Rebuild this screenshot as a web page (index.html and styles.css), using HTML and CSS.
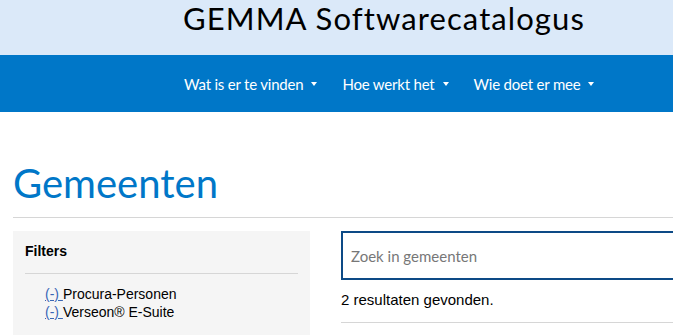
FILE: index.html
```html
<!DOCTYPE html>
<html lang="nl">
<head>
    <meta charset="UTF-8">
    <meta name="viewport" content="width=device-width, initial-scale=1.0">
    <title>Gemeenten - GEMMA Softwarecatalogus</title>
    <link rel="stylesheet" href="styles.css">
</head>
<body>
    <header class="site-header">
        <div class="brand">GEMMA Softwarecatalogus</div>
    </header>

    <nav class="main-nav">
        <ul>
            <li><a href="#">Wat is er te vinden <span class="caret"></span></a></li>
            <li><a href="#">Hoe werkt het <span class="caret"></span></a></li>
            <li><a href="#">Wie doet er mee <span class="caret"></span></a></li>
        </ul>
    </nav>

    <main class="container">
        <h1 class="page-title">Gemeenten</h1>

        <div class="columns">
            <aside class="filters">
                <h4>Filters</h4>
                <ul>
                    <li><a href="#">(-) </a>Procura-Personen</li>
                    <li><a href="#">(-) </a>Verseon® E-Suite</li>
                </ul>
            </aside>

            <section class="results">
                <input type="text" class="search" placeholder="Zoek in gemeenten">
                <p class="count">2 resultaten gevonden.</p>
            </section>
        </div>
    </main>
</body>
</html>
```

FILE: styles.css
```css
:root {
    --primary: #0077c8;
    --header-bg: #dbe9f9;
    --panel-bg: #f5f5f5;
    --rule: #d6d6d6;
}

* {
    box-sizing: border-box;
    margin: 0;
    padding: 0;
}

body {
    font-family: 'Liberation Sans', Arial, sans-serif;
    font-size: 14px;
    color: #000;
    background: #fff;
    overflow: hidden;
}

.site-header {
    background: var(--header-bg);
    height: 55px;
    padding-left: 183px;
}

.brand {
    font-family: 'Lato', sans-serif;
    font-size: 31px;
    line-height: 36px;
    letter-spacing: 1.1px;
    color: #000;
}

.main-nav {
    background: var(--primary);
    height: 57px;
    padding-left: 184px;
}

.main-nav ul {
    list-style: none;
    display: flex;
    gap: 25px;
    padding-top: 20px;
}

.main-nav a {
    font-family: 'Lato', sans-serif;
    font-size: 15px;
    letter-spacing: -0.2px;
    color: #fff;
    text-decoration: none;
    display: flex;
    align-items: center;
    gap: 8px;
}

.caret {
    border-top: 4px solid #fff;
    border-left: 3.5px solid transparent;
    border-right: 3.5px solid transparent;
}

.container {
    padding: 0 0 0 13px;
}

.page-title {
    font-family: 'Lato', sans-serif;
    font-weight: 400;
    font-size: 40px;
    color: var(--primary);
    margin-top: 49px;
    line-height: 44px;
    padding-bottom: 12px;
    border-bottom: 1px solid var(--rule);
}

.columns {
    display: grid;
    grid-template-columns: 297px 1fr;
    gap: 31px;
    margin-top: 13px;
}

.filters {
    background: var(--panel-bg);
    padding: 12px 12px 40px;
}

.filters h4 {
    font-size: 14px;
    font-weight: 700;
    line-height: 16px;
    padding-bottom: 14px;
    border-bottom: 1px solid var(--rule);
}

.filters ul {
    list-style: none;
    padding: 11px 0 0 20px;
    font-size: 14px;
    line-height: 18px;
}

.filters a {
    color: #3966b5;
}

.search {
    width: calc(100% + 20px);
    height: 49px;
    border: 2px solid #0d4a86;
    padding: 0 8px;
    font-family: 'Lato', sans-serif;
    font-size: 15px;
    outline: none;
}

.search::placeholder {
    color: #777;
}

.count {
    font-size: 15px;
    line-height: 18px;
    padding: 11px 0 13px;
    border-bottom: 1px solid var(--rule);
}
```
